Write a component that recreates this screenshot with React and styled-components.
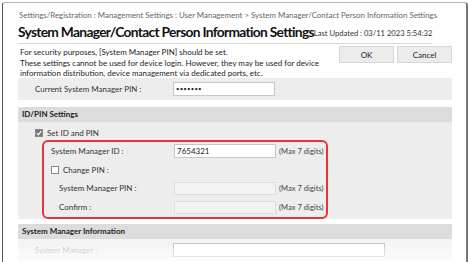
import React from 'react';
import styled, { createGlobalStyle } from 'styled-components';

const GlobalStyle = createGlobalStyle`
  html, body {
    margin: 0;
    padding: 0;
    background: #ffffff;
    overflow: hidden;
  }
  body {
    font-family: Lato, "Noto Sans", sans-serif;
    color: #222;
  }
`;

const Frame = styled.div`
  position: relative;
  margin: 2px 2px 0 2px;
  height: 270px;
  border-left: 1px solid #555;
  border-right: 2px solid #777;
  border-top: 1px solid #b5b5b5;
  border-radius: 3px 3px 0 0;
  background: #fff;
  overflow: hidden;
`;

const Fade = styled.div`
  position: absolute;
  left: 0;
  right: 0;
  bottom: 0;
  height: 26px;
  background: linear-gradient(to bottom, rgba(255, 255, 255, 0.2), #fff 85%);
  pointer-events: none;
`;

const Page = styled.div`
  padding: 5px 12px 0 15px;
`;

const Breadcrumb = styled.div`
  font-size: 7.9px;
  color: #666;
  line-height: 14px;
  padding-left: 1px;
  white-space: nowrap;
`;

const TitleBar = styled.div`
  display: flex;
  align-items: flex-end;
  justify-content: space-between;
  border-bottom: 1px solid #d8d8d8;
  padding-bottom: 2px;
  margin-top: 1px;
  width: 414px;
`;

const Title = styled.h1`
  margin: 0;
  font-size: 13.8px;
  letter-spacing: -0.7px;
  font-weight: 700;
  color: #111;
  line-height: 18px;
  white-space: nowrap;
`;

const Updated = styled.span`
  font-size: 7.6px;
  color: #333;
  line-height: 12px;
  padding-bottom: 2px;
  white-space: nowrap;
`;

const IntroRow = styled.div`
  display: flex;
  justify-content: space-between;
  align-items: flex-start;
  width: 434px;
`;

const Intro = styled.p`
  margin: 3px 0 0 2px;
  font-size: 8px;
  line-height: 10.5px;
  color: #222;
  white-space: nowrap;
`;

const Buttons = styled.div`
  display: flex;
  gap: 3px;
  margin-top: 2px;
`;

const Button = styled.button`
  width: 55px;
  height: 17px;
  font-family: inherit;
  font-size: 8px;
  color: #222;
  background: #ececec;
  border: 1px solid #d6d6d6;
  padding: 0;
`;

const Row = styled.div`
  display: flex;
  align-items: center;
  width: 434px;
  height: ${p => p.$h || 21}px;
  margin-top: ${p => p.$mt || 0}px;
  background: ${p => p.$bg || '#ededed'};
  padding-left: ${p => p.$indent || 0}px;
  box-sizing: border-box;
`;

const Label = styled.span`
  width: ${p => p.$w}px;
  font-size: 8px;
  color: ${p => (p.$faded ? '#bbb' : '#333')};
  white-space: nowrap;
`;

const Input = styled.div`
  width: ${p => p.$w || 102}px;
  height: ${p => p.$h || 14}px;
  box-sizing: border-box;
  border: 1px solid ${p => (p.$disabled ? '#ddd' : '#c6c6c6')};
  background: ${p => (p.$disabled ? '#f3f3f3' : '#fff')};
  font-size: 8px;
  line-height: 12px;
  padding-left: 2px;
  color: #222;
`;

const Dots = styled.span`
  font-size: 6px;
  letter-spacing: 0.2px;
  vertical-align: top;
`;

const Hint = styled.span`
  font-size: 7.6px;
  color: #444;
  margin-left: 3px;
  white-space: nowrap;
`;

const SectionHeader = styled.div`
  width: 434px;
  height: 15px;
  margin-top: ${p => p.$mt || 0}px;
  background: #dcdcdc;
  font-size: 8px;
  font-weight: 700;
  color: #222;
  line-height: 15px;
  padding-left: 4px;
  box-sizing: border-box;
`;

const SectionBody = styled.div`
  width: 434px;
  background: #ededed;
  padding: 4px 0 0 17px;
  box-sizing: border-box;
`;

const CheckRow = styled.label`
  display: flex;
  align-items: center;
  gap: 4px;
  font-size: 8px;
  color: #333;
  height: ${p => p.$h || 14}px;
`;

const Box = styled.span`
  width: 8px;
  height: 8px;
  box-sizing: border-box;
  border: 1px solid #888;
  background: ${p => (p.$checked ? '#777' : '#fff')};
  display: inline-flex;
  align-items: center;
  justify-content: center;
`;

const Highlight = styled.div`
  margin-left: 7px;
  width: 286px;
  box-sizing: border-box;
  border: 2px solid #e8333b;
  border-radius: 6px;
  padding: 0 0 0 7px;
`;

const FieldRow = styled.div`
  display: flex;
  align-items: center;
  height: ${p => p.$h || 19}px;
  padding-left: ${p => p.$indent || 0}px;
`;

const Check = () => (
  <svg width="6" height="6" viewBox="0 0 6 6">
    <path d="M0.8 3.2 L2.4 4.8 L5.2 1.2" stroke="#fff" strokeWidth="1.2" fill="none" />
  </svg>
);

export default function App() {
  return (
    <>
      <GlobalStyle />
      <Frame>
        <Page>
          <Breadcrumb>
            Settings/Registration : Management Settings : User Management &gt; System Manager/Contact Person Information Settings
          </Breadcrumb>
          <TitleBar>
            <Title>System Manager/Contact Person Information Settings</Title>
            <Updated>Last Updated : 03/11 2023 5:54:32</Updated>
          </TitleBar>
          <IntroRow>
            <Intro>
              For security purposes, [System Manager PIN] should be set.
              <br />
              These settings cannot be used for device login. However, they may be used for device
              <br />
              information distribution, device management via dedicated ports, etc.
            </Intro>
            <Buttons>
              <Button>OK</Button>
              <Button>Cancel</Button>
            </Buttons>
          </IntroRow>
          <Row $h={22} $indent={17} $mt={-1}>
            <Label $w={138}>Current System Manager PIN :</Label>
            <Input>
              <Dots>•••••••</Dots>
            </Input>
          </Row>
          <SectionHeader $mt={7}>ID/PIN Settings</SectionHeader>
          <SectionBody>
            <CheckRow $h={14}>
              <Box $checked>
                <Check />
              </Box>
              Set ID and PIN
            </CheckRow>
            <Highlight>
              <FieldRow $h={19}>
                <Label $w={123}>System Manager ID :</Label>
                <Input>7654321</Input>
                <Hint>(Max 7 digits)</Hint>
              </FieldRow>
              <FieldRow $h={18}>
                <CheckRow as="span" $h={18}>
                  <Box />
                  Change PIN :
                </CheckRow>
              </FieldRow>
              <FieldRow $h={19} $indent={8}>
                <Label $w={115}>System Manager PIN :</Label>
                <Input $disabled $h={13} />
                <Hint>(Max 7 digits)</Hint>
              </FieldRow>
              <FieldRow $h={19} $indent={8}>
                <Label $w={115}>Confirm :</Label>
                <Input $disabled $h={13} />
                <Hint>(Max 7 digits)</Hint>
              </FieldRow>
            </Highlight>
          </SectionBody>
          <SectionHeader $mt={5}>System Manager Information</SectionHeader>
          <Row $h={22} $indent={17} $bg="#f4f4f4">
            <Label $w={138} $faded>System Manager :</Label>
            <Input $w={212} />
          </Row>
        </Page>
        <Fade />
      </Frame>
    </>
  );
}
